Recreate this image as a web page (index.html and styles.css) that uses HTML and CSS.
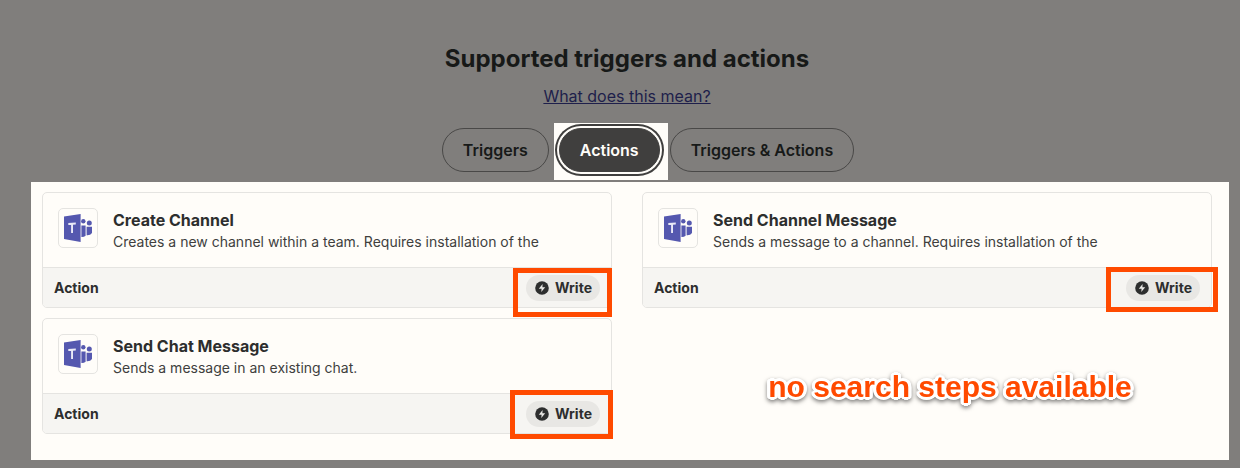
FILE: index.html
```
<!DOCTYPE html>
<html lang="en">
  <head>
    <meta charset="UTF-8" />
    <meta name="viewport" content="width=device-width, initial-scale=1.0" />
    <title>Supported triggers and actions</title>
    <link rel="stylesheet" href="styles.css">
  </head>
  <body>
    <!-- Shared icons -->
    <svg class="sprite" aria-hidden="true">
      <symbol id="teams" viewBox="0 0 28 28">
        <path fill="#5558af" d="M0 2.500 16.600 0v28L0 25z" />
        <path fill="#e9e9f6" d="M4.300 9.100 11.800 8.600v1.900l-2.800.2v8.300l-1.900-.1v-8l-2.800.1z" />
        <circle fill="#5558af" cx="19.300" cy="7.300" r="2.200" />
        <circle fill="#5558af" cx="25.300" cy="8.900" r="2.500" />
        <path fill="#5558af" d="M17.400 11.500h4.200v10.200q-1.700 1.600-4.200 1.400z" />
        <path fill="#5558af" d="M22.600 12.800H28v6.200q-1.600 2.500-5.400 2.200z" />
      </symbol>
      <symbol id="bolt" viewBox="0 0 14 14">
        <circle fill="#2d2e2e" cx="7" cy="7" r="6.800" />
        <path fill="#e8e7e4" d="M7.600 3 3.800 7.700h2.800L6.300 11l3.900-4.700H7.400z" />
      </symbol>
    </svg>

    <header>
      <h2>Supported triggers and actions</h2>
      <a href="#">What does this mean?</a>
      <div class="tabs">
        <button type="button" class="tab">Triggers</button>
        <div class="spotlight">
          <button type="button" class="tab active">Actions</button>
        </div>
        <button type="button" class="tab">Triggers &amp; Actions</button>
      </div>
    </header>

    <main>
      <article class="card">
        <div class="info">
          <div class="logo"><svg><use href="#teams" /></svg></div>
          <div>
            <h3>Create Channel</h3>
            <p>Creates a new channel within a team. Requires installation of the</p>
          </div>
        </div>
        <div class="kind">
          <span>Action</span>
          <span class="badge"><svg><use href="#bolt" /></svg>Write<i class="mark mark-create"></i></span>
        </div>
      </article>

      <article class="card">
        <div class="info">
          <div class="logo"><svg><use href="#teams" /></svg></div>
          <div>
            <h3>Send Channel Message</h3>
            <p>Sends a message to a channel. Requires installation of the</p>
          </div>
        </div>
        <div class="kind">
          <span>Action</span>
          <span class="badge"><svg><use href="#bolt" /></svg>Write<i class="mark mark-message"></i></span>
        </div>
      </article>

      <article class="card">
        <div class="info">
          <div class="logo"><svg><use href="#teams" /></svg></div>
          <div>
            <h3>Send Chat Message</h3>
            <p>Sends a message in an existing chat.</p>
          </div>
        </div>
        <div class="kind">
          <span>Action</span>
          <span class="badge"><svg><use href="#bolt" /></svg>Write<i class="mark mark-chat"></i></span>
        </div>
      </article>

      <p class="note">no search steps available</p>
    </main>
  </body>
</html>
```
FILE: styles.css
```
:root {
  --dim: #807e7c;
  --paper: #fffdf9;
  --line: #e5e4e1;
  --text: #2d2e2e;
  --accent: #ff4a00;
}
* {
  margin: 0;
  padding: 0;
  box-sizing: border-box;
}

body {
  font-family: Inter, sans-serif;
  background: var(--dim);
  color: var(--text);
  padding: 44px 11px 8px 31px;
}

.sprite {
  display: none;
}

header {
  display: flex;
  flex-direction: column;
  align-items: center;
  padding: 0 17px 10px 11px;
  color: #171918;
}

h2 {
  font-size: 24px;
  line-height: 30px;
  font-weight: 700;
}

header a {
  margin-top: 10px;
  font-size: 16px;
  line-height: 24px;
  color: #1e1f4b;
}

.tabs {
  display: flex;
  align-items: flex-start;
  gap: 10px;
  margin-top: 20px;
  margin-left: 42px;
}

.tab {
  height: 44px;
  padding: 0 20px;
  border: 1px solid #494847;
  border-radius: 22px;
  background: none;
  color: #171918;
  font-family: inherit;
  font-size: 16px;
  font-weight: 600;
  white-space: nowrap;
  cursor: pointer;
}

.spotlight {
  display: flex;
  margin: -5px -8px -8px -5px;
  padding: 5px 8px 8px 5px;
  background: var(--paper);
}

.tab.active {
  border-color: #403f3e;
  background: #403f3e;
  color: var(--paper);
  box-shadow: 0 0 0 2px var(--paper), 0 0 0 4px #403f3e;
}

main {
  display: grid;
  grid-template-columns: 1fr 1fr;
  gap: 10px 30px;
  padding: 10px 17px 26px 11px;
  background: var(--paper);
}

.card {
  border: 1px solid var(--line);
  border-radius: 5px;
}

.info {
  display: flex;
  gap: 15px;
  height: 74px;
  padding: 15px;
}

.logo {
  display: flex;
  align-items: center;
  justify-content: center;
  width: 40px;
  height: 40px;
  border: 1px solid var(--line);
  border-radius: 5px;
}

.logo svg {
  width: 28px;
  height: 28px;
}

h3 {
  font-size: 16px;
  line-height: 24px;
  font-weight: 700;
}

.info p {
  font-size: 14px;
  line-height: 20px;
  color: #403f3e;
}

.kind {
  display: flex;
  align-items: center;
  justify-content: space-between;
  height: 40px;
  padding: 0 11px;
  border-top: 1px solid var(--line);
  border-radius: 0 0 4px 4px;
  background: #f6f5f2;
  font-size: 14px;
  font-weight: 700;
}

.badge {
  position: relative;
  display: flex;
  align-items: center;
  gap: 6px;
  height: 26px;
  padding: 0 8px 0 9px;
  border-radius: 13px;
  background: #e8e7e4;
}

.badge svg {
  width: 14px;
  height: 14px;
}

/* Highlight frames drawn over the badges */
.mark {
  position: absolute;
  border: 5px solid var(--accent);
}

.mark-create {
  inset: -7px -12px -16px -13px;
}

.mark-message {
  inset: -8px -18px -11px -20px;
}

.mark-chat {
  inset: -11px -13px -12px -16px;
}

/* White halo around the letters, then a soft shadow under it */
.note {
  align-self: center;
  padding: 22px 0 0 46px;
  font-family: "Liberation Sans", Arial, sans-serif;
  font-size: 30px;
  line-height: 34px;
  font-weight: 700;
  text-align: center;
  color: var(--accent);
  text-shadow: 3px 0 #fff, -3px 0 #fff, 0 3px #fff, 0 -3px #fff,
    2px 2px #fff, -2px 2px #fff, 2px -2px #fff, -2px -2px #fff,
    3px 1px #fff, -3px 1px #fff, 3px -1px #fff, -3px -1px #fff;
  filter: drop-shadow(0 2px 2px rgba(0, 0, 0, 0.5));
}
```
